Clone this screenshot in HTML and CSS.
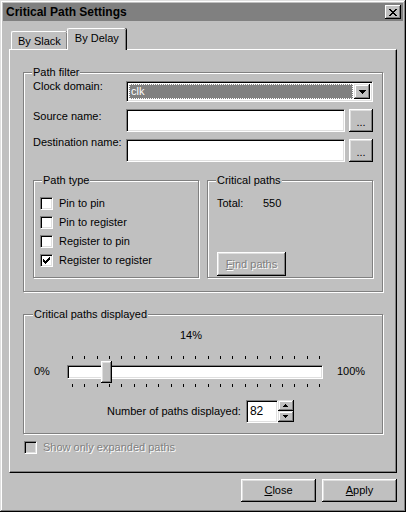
FILE: index.html
```html
<!DOCTYPE html>
<html lang="en">
  <head>
    <meta charset="UTF-8" />
    <title>Critical Path Settings</title>
    <link rel="stylesheet" href="styles.css">
  </head>
  <body>
    <div class="window">
      <div class="titlebar">
        <span class="title">Critical Path Settings</span>
        <div class="title-close">
          <svg width="8" height="7" viewBox="0 0 8 7" shape-rendering="crispEdges">
            <path d="M0 0h2v1h-2z M6 0h2v1h-2z M1 1h2v1h-2z M5 1h2v1h-2z M2 2h4v1h-4z M3 3h2v1h-2z M2 4h4v1h-4z M1 5h2v1h-2z M5 5h2v1h-2z M0 6h2v1h-2z M6 6h2v1h-2z" fill="#000"/>
          </svg>
        </div>
      </div>

      <div class="dialog-body">
        <div class="tabs">
          <div class="tab">By Slack</div>
          <div class="tab active">By Delay</div>
        </div>

        <div class="panel">
          <fieldset class="group filter-group">
            <legend>Path filter</legend>
            <div class="filter-grid">
              <span class="field-label label-clock">Clock domain:</span>
              <div class="combo">
                <div class="combo-value"><span>clk</span></div>
                <div class="combo-btn">
                  <svg width="7" height="4" viewBox="0 0 7 4" shape-rendering="crispEdges">
                    <path d="M0 0h7v1h-7z M1 1h5v1h-5z M2 2h3v1h-3z M3 3h1v1h-1z" fill="#000"/>
                  </svg>
                </div>
              </div>

              <span class="field-label label-source">Source name:</span>
              <div class="input-row">
                <div class="text-input"></div>
                <div class="btn btn-browse">...</div>
              </div>

              <span class="field-label label-dest">Destination name:</span>
              <div class="input-row">
                <div class="text-input"></div>
                <div class="btn btn-browse">...</div>
              </div>
            </div>

            <div class="sub-groups">
              <fieldset class="group sub-group">
                <legend>Path type</legend>
                <div class="check-list">
                  <div class="check-row"><span class="check"></span>Pin to pin</div>
                  <div class="check-row"><span class="check"></span>Pin to register</div>
                  <div class="check-row"><span class="check"></span>Register to pin</div>
                  <div class="check-row">
                    <span class="check">
                      <svg width="7" height="7" viewBox="0 0 7 7" shape-rendering="crispEdges">
                        <path d="M6 0h1v1h-1z M5 1h2v1h-2z M0 2h1v1h-1z M4 2h3v1h-3z M0 3h2v1h-2z M3 3h3v1h-3z M0 4h5v1h-5z M1 5h3v1h-3z M2 6h1v1h-1z" fill="#000"/>
                      </svg>
                    </span>Register to register
                  </div>
                </div>
              </fieldset>

              <fieldset class="group sub-group totals-group">
                <legend>Critical paths</legend>
                <div class="total-row"><span class="total-label">Total:</span><span>550</span></div>
                <div class="btn btn-find disabled"><span><u>F</u>ind paths</span></div>
              </fieldset>
            </div>
          </fieldset>

          <fieldset class="group displayed-group">
            <legend>Critical paths displayed</legend>
            <div class="percent-label">14%</div>
            <div class="slider-row">
              <span class="slider-min">0%</span>
              <div class="slider">
                <div class="ticks">
                  <i></i><i></i><i></i><i></i><i></i><i></i><i></i><i></i><i></i><i></i><i></i>
                  <i></i><i></i><i></i><i></i><i></i><i></i><i></i><i></i><i></i><i></i>
                </div>
                <div class="track">
                  <div class="thumb"></div>
                </div>
                <div class="ticks">
                  <i></i><i></i><i></i><i></i><i></i><i></i><i></i><i></i><i></i><i></i><i></i>
                  <i></i><i></i><i></i><i></i><i></i><i></i><i></i><i></i><i></i><i></i>
                </div>
              </div>
              <span class="slider-max">100%</span>
            </div>
            <div class="count-row">
              <span>Number of paths displayed:</span>
              <div class="spin">
                <div class="spin-input">82</div>
                <div class="spin-btns">
                  <div class="spin-btn">
                    <svg width="5" height="3" viewBox="0 0 5 3" shape-rendering="crispEdges">
                      <path d="M2 0h1v1h-1z M1 1h3v1h-3z M0 2h5v1h-5z" fill="#000"/>
                    </svg>
                  </div>
                  <div class="spin-btn">
                    <svg width="5" height="3" viewBox="0 0 5 3" shape-rendering="crispEdges">
                      <path d="M0 0h5v1h-5z M1 1h3v1h-3z M2 2h1v1h-1z" fill="#000"/>
                    </svg>
                  </div>
                </div>
              </div>
            </div>
          </fieldset>

          <div class="check-row expanded-row disabled">
            <span class="check check-disabled"></span><span class="disabled-text">Show only expanded paths</span>
          </div>
        </div>

        <div class="footer">
          <div class="btn btn-dialog"><span><u>C</u>lose</span></div>
          <div class="btn btn-dialog"><span><u>A</u>pply</span></div>
        </div>
      </div>
    </div>
  </body>
</html>
```

FILE: styles.css
```css
body {
  margin: 0;
  padding: 0;
  font-family: "Liberation Sans", Arial, sans-serif;
  font-size: 11px;
  line-height: 13px;
  color: #000;
  background-color: #c0c0c0;
}

.window {
  width: 406px;
  height: 512px;
  box-sizing: border-box;
  padding: 3px;
  background-color: #c0c0c0;
  box-shadow: inset -1px -1px #000, inset 1px 1px #dfdfdf,
    inset -2px -2px #808080, inset 2px 2px #fff;
  display: flex;
  flex-direction: column;
}

/* title bar */
.titlebar {
  height: 18px;
  background-color: #808080;
  display: flex;
  align-items: center;
  justify-content: space-between;
  padding: 0 2px 0 3px;
}

.title {
  font-size: 12px;
  font-weight: bold;
}

.title-close {
  width: 16px;
  height: 14px;
  box-sizing: border-box;
  display: flex;
  align-items: center;
  justify-content: center;
  background-color: #c0c0c0;
  box-shadow: inset -1px -1px #000, inset 1px 1px #fff,
    inset -2px -2px #808080;
}

.title-close svg {
  margin-left: -1px;
}

/* raised button */
.btn {
  box-sizing: border-box;
  display: flex;
  align-items: center;
  justify-content: center;
  background-color: #c0c0c0;
  box-shadow: inset -1px -1px #000, inset 1px 1px #fff,
    inset -2px -2px #808080, inset 2px 2px #dfdfdf;
}

.btn.disabled span {
  color: #808080;
  text-shadow: 1px 1px #fff;
}

.dialog-body {
  flex: 1;
  padding: 7px 6px 0 6px;
  display: flex;
  flex-direction: column;
}

/* tabs */
.tabs {
  display: flex;
  align-items: flex-end;
  height: 21px;
  padding-left: 2px;
}

.tab {
  height: 18px;
  box-sizing: border-box;
  padding: 3px 6px 0 6px;
  border-top: 1px solid #fff;
  border-left: 1px solid #fff;
  border-top-left-radius: 2px;
  border-top-right-radius: 2px;
  box-shadow: inset -1px 0 #808080, 1px 0 #000;
}

.tab.active {
  height: 22px;
  margin-bottom: -1px;
  padding: 3px 7px 0 7px;
  position: relative;
  z-index: 1;
  background-color: #c0c0c0;
}

.panel {
  height: 424px;
  box-sizing: border-box;
  border: 1px solid;
  border-color: #fff #000 #000 #fff;
  box-shadow: inset -1px -1px #808080;
  padding: 16px 0 0 13px;
}

/* etched group boxes */
.group {
  margin: 0;
  min-width: 0;
  border: 1px solid #808080;
  box-shadow: inset 1px 1px #fff, 1px 1px #fff;
}

.group legend {
  padding: 0 1px;
  background-color: #c0c0c0;
  line-height: 13px;
}

.filter-group {
  width: 360px;
  box-sizing: border-box;
  padding: 2px 8px 13px 9px;
}

.filter-group legend {
  margin-left: -1px;
}

.filter-grid {
  display: grid;
  grid-template-columns: 93px 247px;
  row-gap: 7px;
}

.field-label {
  margin-top: 1px;
}

.label-clock {
  margin-top: -1px;
}

.label-dest {
  margin-top: -3px;
}

.combo {
  height: 21px;
  box-sizing: border-box;
  padding: 2px;
  display: flex;
  background-color: #fff;
  border: 1px solid;
  border-color: #808080 #fff #fff #808080;
  box-shadow: inset 1px 1px #000, inset -1px -1px #dfdfdf;
}

.combo-value {
  flex: 1;
  margin-right: 1px;
  background-color: #808080;
  color: #fff;
  outline: 1px dotted #fff;
  outline-offset: -1px;
  padding-left: 2px;
  line-height: 15px;
}

.combo-value span {
  display: inline-block;
}

.combo-btn {
  width: 16px;
  height: 15px;
  box-sizing: border-box;
  display: flex;
  align-items: center;
  justify-content: center;
  background-color: #c0c0c0;
  box-shadow: inset -1px -1px #000, inset 1px 1px #dfdfdf,
    inset -2px -2px #808080, inset 2px 2px #fff;
}

.input-row {
  display: flex;
  gap: 4px;
}

.text-input {
  width: 219px;
  height: 23px;
  box-sizing: border-box;
  background-color: #fff;
  border: 1px solid;
  border-color: #808080 #fff #fff #808080;
  box-shadow: inset 1px 1px #000, inset -1px -1px #dfdfdf;
}

.btn-browse {
  width: 24px;
  height: 23px;
  padding-top: 3px;
}

.sub-groups {
  display: flex;
  gap: 8px;
  margin-top: 12px;
}

.sub-group {
  width: 166px;
  box-sizing: border-box;
  padding: 7px 6px 7px 6px;
}

.sub-group legend {
  margin-left: 2px;
}

.check-list {
  display: flex;
  flex-direction: column;
}

.check-row {
  height: 19px;
  display: flex;
  align-items: center;
}

.check {
  width: 13px;
  height: 13px;
  box-sizing: border-box;
  margin-right: 6px;
  display: flex;
  align-items: center;
  justify-content: center;
  background-color: #fff;
  border: 1px solid;
  border-color: #808080 #fff #fff #808080;
  box-shadow: inset 1px 1px #000, inset -1px -1px #dfdfdf;
}

.totals-group {
  display: flex;
  flex-direction: column;
  padding: 7px 6px 1px 9px;
}

.totals-group legend {
  margin-left: -1px;
}

.total-row {
  height: 19px;
  display: flex;
  align-items: center;
}

.total-label {
  width: 46px;
}

.btn-find {
  margin-top: auto;
  width: 69px;
  height: 24px;
}

/* displayed paths */
.displayed-group {
  width: 360px;
  box-sizing: border-box;
  margin-top: 16px;
  padding: 8px 8px 10px 10px;
}

.displayed-group legend {
  margin-left: -1px;
}

.percent-label {
  padding-left: 146px;
}

.slider-row {
  display: flex;
  align-items: center;
  margin-top: 14px;
}

.slider-min {
  width: 33px;
}

.slider {
  width: 256px;
  display: flex;
  flex-direction: column;
}

.ticks {
  display: flex;
  justify-content: space-between;
  margin: 0 3px 0 5px;
  height: 3px;
}

.ticks i {
  width: 1px;
  height: 3px;
  background-color: #000;
}

.track {
  position: relative;
  height: 14px;
  margin: 6px 0 5px 0;
  box-sizing: border-box;
  background-color: #fff;
  border: 1px solid;
  border-color: #808080 #fff #fff #808080;
  box-shadow: inset 1px 1px #000, inset -1px -1px #dfdfdf;
}

.thumb {
  position: absolute;
  left: 33px;
  top: -5px;
  width: 11px;
  height: 22px;
  background-color: #c0c0c0;
  box-shadow: inset -1px -1px #000, inset 1px 1px #fff,
    inset -2px -2px #808080, inset 2px 2px #dfdfdf;
}

.slider-max {
  margin-left: 14px;
}

.count-row {
  display: flex;
  align-items: center;
  margin-top: 13px;
  padding-left: 73px;
}

.spin {
  display: flex;
  margin-left: 5px;
}

.spin-input {
  width: 32px;
  height: 23px;
  box-sizing: border-box;
  padding: 4px 0 0 3px;
  font-size: 12px;
  background-color: #fff;
  border: 1px solid;
  border-color: #808080 #fff #fff #808080;
  box-shadow: inset 1px 1px #000, inset -1px -1px #dfdfdf;
}

.spin-btns {
  display: flex;
  flex-direction: column;
}

.spin-btn {
  width: 16px;
  height: 11px;
  box-sizing: border-box;
  display: flex;
  align-items: center;
  justify-content: center;
  background-color: #c0c0c0;
  box-shadow: inset -1px -1px #000, inset 1px 1px #dfdfdf,
    inset -2px -2px #808080, inset 2px 2px #fff;
}

.expanded-row {
  margin-top: 4px;
  margin-left: 1px;
}

.check-disabled {
  background-color: #c0c0c0;
}

.disabled-text {
  color: #808080;
  text-shadow: 1px 1px #fff;
}

/* footer buttons */
.footer {
  display: flex;
  justify-content: flex-end;
  gap: 6px;
  margin-top: 6px;
}

.btn-dialog {
  width: 75px;
  height: 23px;
}
```
